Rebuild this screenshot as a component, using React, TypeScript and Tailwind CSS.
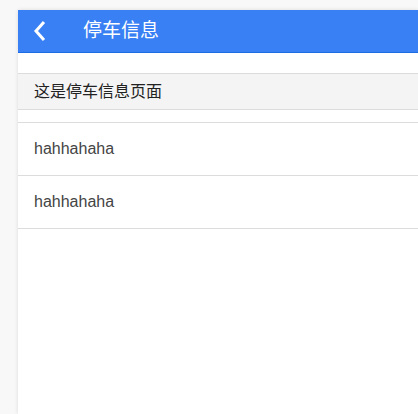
export default function App() {
  const items = ['hahhahaha', 'hahhahaha']
  return (
    <div className="h-[414px] w-[418px] overflow-hidden bg-[#f8f8f8] pl-[18px] pt-[10px] font-['Liberation_Sans','Noto_Sans_CJK_SC',sans-serif]">
      <div className="h-full bg-white shadow-[0_0_4px_rgba(0,0,0,0.12)]">
        <div className="flex h-[43px] items-center border-b border-[#1e6be6] bg-[#3880f4] text-white">
          <svg width="14" height="22" viewBox="0 0 14 22" className="ml-[15px]">
            <path d="M11 2 L3 11 L11 20" fill="none" stroke="white" strokeWidth="3" />
          </svg>
          <span className="ml-[36px] text-[19px]">停车信息</span>
        </div>
        <div className="h-[20px]" />
        <div className="flex h-[37px] items-center border-y border-[#dcdcdc] bg-[#f4f4f4] pl-4 text-[16px] text-[#222]">
          这是停车信息页面
        </div>
        <div className="h-[13px] border-b border-[#dcdcdc]" />
        {items.map((t, i) => (
          <div key={i} className="flex h-[53px] items-center border-b border-[#dcdcdc] pl-4 text-[16px] text-[#444]">
            {t}
          </div>
        ))}
      </div>
    </div>
  )
}
